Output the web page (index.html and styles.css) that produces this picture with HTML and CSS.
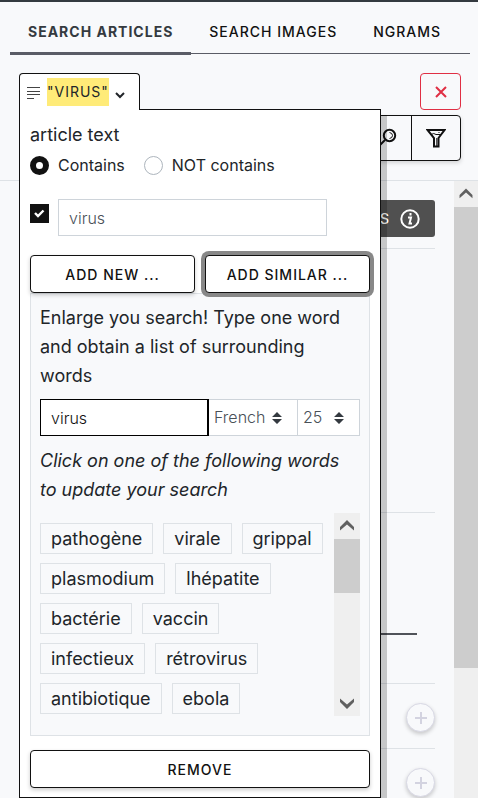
FILE: index.html
```html
<!DOCTYPE html>
<html lang="en">
<head>
<meta charset="utf-8">
<meta name="viewport" content="width=device-width, initial-scale=1">
<title>Search articles</title>
<link rel="stylesheet" href="styles.css">
</head>
<body>
<div class="app">
  <header class="header">
    <nav class="tabs">
      <a class="tab tab-active" href="#articles">Search articles</a>
      <a class="tab" href="#images">Search images</a>
      <a class="tab" href="#ngrams">Ngrams</a>
    </nav>
    <div class="query">
      <div class="filter">
        <button class="filter-toggle" type="button" aria-expanded="true">
          <svg class="lines-icon" viewBox="0 0 14 12" width="14" height="12" aria-hidden="true"><path d="M0 .5h13M0 4.500h13M0 7.500h13M0 11.500h7"/></svg>
          <span class="highlight">"virus"</span>
          <svg class="chevron-icon" viewBox="0 0 10 7" width="10" height="7" aria-hidden="true"><path d="M1 1l4 4 4-4"/></svg>
        </button>
        <form class="popup">
          <div class="popup-title">article text</div>
          <div class="radios">
            <label class="radio-label"><input class="radio" type="radio" name="mode" checked>Contains</label>
            <label class="radio-label"><input class="radio" type="radio" name="mode">NOT contains</label>
          </div>
          <div class="term">
            <input class="check" type="checkbox" aria-label="Use virus" checked>
            <input class="field term-field" type="text" aria-label="Search term" value="virus">
          </div>
          <div class="actions">
            <button class="btn" type="button">Add new ...</button>
            <button class="btn btn-focus" type="button">Add similar ...</button>
          </div>
          <div class="similar">
            <label class="help" for="similar-word">Enlarge you search! Type one word and obtain a list of surrounding words</label>
            <div class="similar-row">
              <input class="field similar-field" id="similar-word" type="text" value="virus">
              <select class="field select select-language" aria-label="Language"><option>French</option></select>
              <select class="field select select-count" aria-label="Number of words"><option>25</option></select>
            </div>
            <p class="help hint">Click on one of the following words to update your search</p>
            <div class="words">
              <div class="chips">
                <button class="chip" type="button">pathogène</button>
                <button class="chip" type="button">virale</button>
                <button class="chip" type="button">grippal</button>
                <button class="chip" type="button">plasmodium</button>
                <button class="chip" type="button">lhépatite</button>
                <button class="chip" type="button">bactérie</button>
                <button class="chip" type="button">vaccin</button>
                <button class="chip" type="button">infectieux</button>
                <button class="chip" type="button">rétrovirus</button>
                <button class="chip" type="button">antibiotique</button>
                <button class="chip" type="button">ebola</button>
              </div>
              <div class="scrollbar" aria-hidden="true">
                <svg class="arrow" viewBox="0 0 26 26"><path d="M6 14l7-7 7 7v3.500l-7-6-7 6z"/></svg>
                <div class="track"><div class="thumb thumb-words"></div></div>
                <svg class="arrow" viewBox="0 0 26 26"><path d="M6 12l7 7 7-7v-3.500l-7 6-7-6z"/></svg>
              </div>
            </div>
          </div>
          <button class="btn btn-remove" type="button">Remove</button>
        </form>
      </div>
      <div class="tools">
        <button class="clear" type="button" aria-label="Clear search">
          <svg viewBox="0 0 12 12" width="12" height="12" aria-hidden="true"><path d="M1 1l10 10M11 1L1 11"/></svg>
        </button>
        <div class="tool-group">
          <button class="tool" type="button" aria-label="Search">
            <svg viewBox="0 0 20 20" width="20" height="20" aria-hidden="true"><circle cx="12.500" cy="7.500" r="5.700"/><path d="M8 12l-6 6"/><path class="thin" d="M12.500 4.500q3 .5 3 3t-3 3"/></svg>
          </button>
          <button class="tool" type="button" aria-label="Filter">
            <svg viewBox="0 0 20 20" width="20" height="20" aria-hidden="true"><path d="M1.500 2h17l-6 8v8.500h-4.500v-8.500z"/><path class="thin" d="M5 6.500q3-2 5 0h5M10.800 10v8M13 4v1"/></svg>
          </button>
        </div>
      </div>
    </div>
  </header>
  <main class="main">
    <div class="results">
      <div class="results-head">
        <button class="info" type="button">results
          <svg viewBox="0 0 20 20" width="20" height="20" aria-hidden="true"><circle cx="10" cy="10" r="8.700"/><path d="M8 8.500h3l-1.500 6h2.500M10.500 4v2.500"/></svg>
        </button>
      </div>
      <div class="chart"></div>
      <div class="range"><div class="range-line"></div></div>
      <div class="facet"><button class="plus" type="button" aria-label="Expand"><svg viewBox="0 0 12 12" width="12" height="12"><path d="M6 0v12M0 6h12"/></svg></button></div>
      <div class="facet"><button class="plus" type="button" aria-label="Expand"><svg viewBox="0 0 12 12" width="12" height="12"><path d="M6 0v12M0 6h12"/></svg></button></div>
    </div>
    <div class="scrollbar scrollbar-page" aria-hidden="true">
      <svg class="arrow" viewBox="0 0 26 26"><path d="M6 14l7-7 7 7v3.500l-7-6-7 6z"/></svg>
      <div class="track"><div class="thumb thumb-page"></div></div>
    </div>
  </main>
</div>
</body>
</html>
```
FILE: styles.css
```css
* { box-sizing: border-box; }
body {
  margin: 0;
  background: #f8f9fb;
  color: #212529;
  font: 18px/29px Inter, "Liberation Sans", sans-serif;
}
button, input, select { font: inherit; color: inherit; margin: 0; border-radius: 0; }
svg { fill: none; stroke: currentColor; flex: none; }
.app {
  display: flex;
  flex-direction: column;
  height: 100vh;
  overflow: hidden;
  border-top: 2px solid #343a40;
}

.header { border-bottom: 1px solid #dee2e6; padding-bottom: 19px; }
.tabs {
  display: flex;
  margin: 0 8px 0 10px;
  height: 52px;
  border-bottom: 1px solid #5a5c66;
}
.tab {
  height: 53px;
  padding: 16px 18px 0;
  color: #111;
  font-size: 14px;
  font-weight: 500;
  line-height: 28px;
  letter-spacing: 1px;
  text-transform: uppercase;
  text-decoration: none;
  white-space: nowrap;
}
.tab-active { color: #343a40; font-weight: 700; border-bottom: 3px solid #5a5c66; }

.query {
  display: flex;
  justify-content: space-between;
  align-items: flex-start;
  padding: 19px 17px 0 19px;
}
.filter { position: relative; }
.filter-toggle {
  position: relative;
  z-index: 2;
  display: flex;
  align-items: center;
  height: 37px;
  padding: 0 14px 0 7px;
  background: #fff;
  border: 1px solid #111;
  border-bottom: 0;
  border-radius: 4px 4px 0 0;
  font-size: 14px;
  font-weight: 400;
  letter-spacing: 1px;
  text-transform: uppercase;
}
.lines-icon { margin: 2px 6px 0 0; color: #444; }
.highlight { background: #ffeb78; line-height: 28px; }
.chevron-icon { margin: 6px 0 0 6px; stroke-width: 2; }

.popup {
  position: absolute;
  z-index: 1;
  top: 36px;
  left: 0;
  width: 362px;
  padding: 9px 10px;
  background: #fff;
  border: 1px solid #111;
  box-shadow: 6px 6px 0 rgba(0, 0, 0, .2);
}
.popup-title { line-height: 31px; }
.radios { display: flex; gap: 19px; height: 30px; font-size: 16px; }
.radio-label { display: flex; align-items: center; gap: 9px; }
.radio {
  appearance: none;
  width: 19px;
  height: 19px;
  border: 1px solid #adb5bd;
  border-radius: 50%;
  background: #fff;
}
.radio:checked { border: 6px solid #111; }
.term { display: flex; gap: 9px; margin-top: 19px; }
.check {
  appearance: none;
  width: 19px;
  height: 19px;
  margin-top: 5px;
  background: #111 url("data:image/svg+xml,%3Csvg xmlns='http://www.w3.org/2000/svg' viewBox='0 0 19 19'%3E%3Cpath d='M5 9l3 3 5.500-5.500' fill='none' stroke='white' stroke-width='2.400'/%3E%3C/svg%3E");
}
.field {
  height: 37px;
  padding: 0 10px;
  border: 1px solid #ced4da;
  background: #fff;
  color: #495057;
  font-size: 16px;
  font-weight: 300;
  outline: 0;
}
.term-field { width: 269px; }
.actions { display: flex; gap: 10px; margin-top: 19px; }
.btn {
  flex: 1;
  height: 38px;
  background: #fff;
  color: #111;
  border: 1px solid #111;
  border-radius: 4px;
  box-shadow: 0 2px 4px rgba(0, 0, 0, .2);
  font-size: 14px;
  font-weight: 500;
  letter-spacing: 1px;
  text-transform: uppercase;
  white-space: nowrap;
}
.btn-focus { box-shadow: 0 0 0 4px #888; }
.btn-remove { display: block; width: 100%; margin-top: 14px; }

.similar { padding: 9px 9px 19px; background: #f8f9fb; border: 1px solid #dee2e6; }
.help { display: block; margin: 0; }
.similar-row { display: flex; margin: 9px 0 10px; }
.similar-field { flex: 1; min-width: 0; border-color: #000; color: #111; border-right-width: 2px; }
.select {
  appearance: none;
  padding: 0 5px;
  border-left: 0;
  background: #fff url("data:image/svg+xml,%3Csvg xmlns='http://www.w3.org/2000/svg' viewBox='0 0 10 12'%3E%3Cpath fill='%23343a40' d='M5 0L0 5h10zM5 12L0 7h10z'/%3E%3C/svg%3E") no-repeat right 15px center / 10px 12px;
}
.select-language { width: 89px; }
.select-count { width: 62px; }
.hint { font-style: italic; }
.words { display: flex; height: 203px; margin-top: 9px; }
.chips {
  flex: 1;
  display: flex;
  flex-wrap: wrap;
  align-content: flex-start;
  gap: 9px 10px;
  padding-top: 10px;
}
.chip {
  height: 31px;
  padding: 0 10px;
  background: transparent;
  border: 1px solid #dee2e6;
}
.scrollbar { display: flex; flex-direction: column; width: 26px; background: #efefef; }
.arrow { width: 26px; height: 26px; fill: #606060; stroke: none; }
.track { flex: 1; }
.thumb { background: #cdcdcd; }
.thumb-words { height: 36%; }

.tools { display: flex; flex-direction: column; align-items: flex-end; gap: 5px; }
.clear {
  display: flex;
  align-items: center;
  justify-content: center;
  width: 41px;
  height: 37px;
  background: transparent;
  border: 1px solid #e02f44;
  border-radius: 4px;
  color: #e02f44;
}
.clear svg { stroke-width: 2; }
.tool-group {
  display: flex;
  border: 1px solid #111;
  border-radius: 4px;
  box-shadow: 0 2px 4px rgba(0, 0, 0, .15);
}
.tool {
  display: flex;
  align-items: center;
  justify-content: center;
  width: 49px;
  height: 44px;
  padding: 0;
  background: transparent;
  border: 0;
  color: #111;
}
.tool + .tool { border-left: 1px solid #111; }
.tool svg { stroke-width: 2; }
.tool .thin { stroke-width: 1; }

.main { flex: 1; min-height: 0; display: flex; overflow: hidden; }
.results { flex: 1; padding: 19px 19px 0; }
.results > * { border-bottom: 1px solid #dee2e6; }
.results-head { display: flex; justify-content: flex-end; padding-bottom: 11px; }
.info {
  display: flex;
  align-items: center;
  gap: 10px;
  height: 37px;
  padding: 0 15px;
  background: #505050;
  border: 0;
  border-radius: 3px;
  color: #fff;
  font-size: 14px;
  font-weight: 500;
  letter-spacing: 1px;
  text-transform: uppercase;
}
.info svg { stroke-width: 2; }
.chart { height: 264px; }
.range { height: 171px; padding: 120px 18px 0; }
.range-line { height: 2px; background: #505359; }
.facet { display: flex; justify-content: flex-end; align-items: flex-start; height: 65px; padding-top: 19px; }
.plus {
  display: flex;
  align-items: center;
  justify-content: center;
  width: 29px;
  height: 29px;
  padding: 0;
  background: #f8f9fb;
  border: 1px solid #d8d8e4;
  border-radius: 50%;
  box-shadow: 0 2px 4px rgba(0, 0, 0, .2);
  color: #d3d3e0;
}
.plus svg { stroke-width: 2; }
.scrollbar-page { width: 24px; }
.scrollbar-page .arrow { width: 24px; }
.thumb-page { height: 78%; }
```
